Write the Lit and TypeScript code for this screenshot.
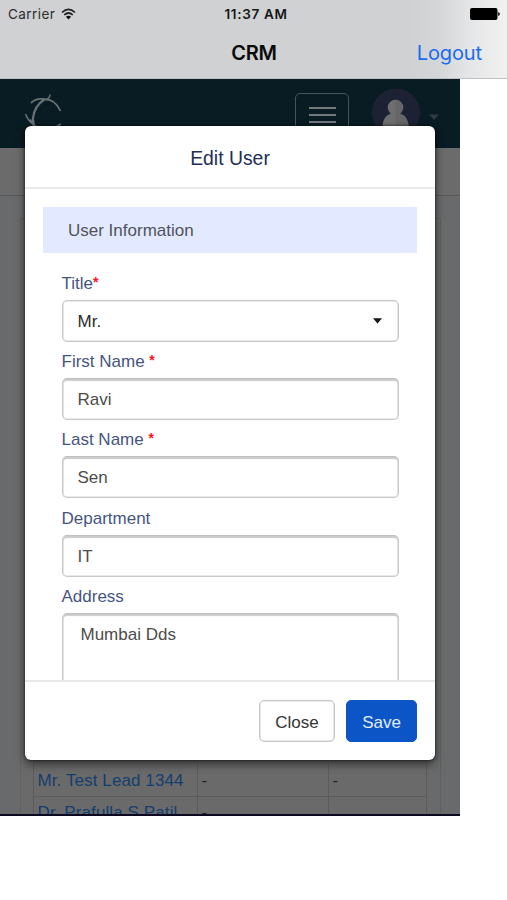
import { LitElement, html, css, svg } from "lit";
import { customElement, property } from "lit/decorators.js";

@customElement("form-field")
class FormField extends LitElement {
  @property() label = "";
  @property() value = "";
  @property() kind = "text";
  @property() mark = "";

  static styles = css`
    :host { display: block; height: 78.2px; }
    .label { box-sizing: border-box; height: 28px; padding-top: 1px; line-height: 22px; color: #46557f; font-size: 17px; white-space: pre; }
    .mark { color: #ff1018; font-weight: bold; font-size: 14px; line-height: 1; vertical-align: 2px; }
    .control {
      box-sizing: border-box; height: 42px; border: 1px solid #c9c9c9; border-radius: 5px;
      background: #fff; padding: 1px 16px 0 15px; display: flex; align-items: center;
      justify-content: space-between; color: #4c4c4c; font-size: 17px; line-height: 23px;
      box-shadow: inset 0 0 0 .6px #d5d5d5;
    }
    .control svg { margin-bottom: 1px; }
    .text, .area { border-top-color: #c0c0c0; box-shadow: inset 0 2px 1px #cbcbcb, inset 0 0 0 .6px #d5d5d5; }
    .select { color: #2b2b2b; }
    .area { height: 100px; align-items: flex-start; padding: 9px 18px; }
  `;

  render() {
    return html`
      <div class="label">${this.label}<span class="mark">${this.mark}</span></div>
      <div class="control ${this.kind}">
        <span>${this.value}</span>
        ${this.kind === "select"
          ? html`<svg width="9" height="6" viewBox="0 0 9 6"><path d="M0 .3H9L4.5 5.5Z" fill="#151515" /></svg>`
          : null}
      </div>
    `;
  }
}

const wifi = svg`
  <path d="M1 4.5Q7.5-1.7 14 4.5M3.2 7Q7.5 3 11.8 7" fill="none" stroke="#222" stroke-width="1.7"/>
  <path d="M4.9 8.7Q7.5 6.6 10.1 8.7L7.5 11.4Z" fill="#111"/>`;

@customElement("app-root")
class AppRoot extends LitElement {
  static styles = css`
    :host {
      display: block; position: relative; width: 507px; height: 900px; overflow: hidden;
      background: #fff; font-family: "Liberation Sans", Arial, sans-serif;
    }
    .native {
      box-sizing: border-box; height: 79px; border-bottom: 1px solid #bfc1c2;
      background: linear-gradient(90deg, #cfd1d2 0, #cfd1d2 410px, #d4d6d7 440px, #e5e6e7 470px, #f1f1f2 507px);
      font-family: Inter, sans-serif;
    }
    .status { height: 28px; display: grid; grid-template-columns: 1fr auto 1fr; align-items: center; padding: 0 7px 0 8px; }
    .carrier { display: flex; align-items: center; gap: 6px; font-size: 13.5px; color: #2c2d2e; letter-spacing: .45px; }
    .time { font-size: 13.5px; font-weight: 600; color: #161616; letter-spacing: .65px; padding-left: 4px; }
    .battery { justify-self: end; display: block; }
    .nav { height: 50px; display: grid; grid-template-columns: 1fr auto 1fr; align-items: center; padding: 0 25px 0 26px; }
    .title { font-size: 20px; font-weight: 600; color: #0a0a0a; grid-column: 2; letter-spacing: -.2px; }
    .logout { font-size: 20px; color: #1a6cf0; justify-self: end; letter-spacing: -.1px; }
    .page {
      box-sizing: border-box; width: 460px; height: 737px; background: #696a6b; overflow: hidden;
      border-bottom: 2px solid #0b0a20; display: flex; flex-direction: column;
    }
    .topbar { flex: none; height: 69px; background: #0a1c23; display: flex; padding: 14px 20px 0 24px; box-sizing: border-box; }
    .logo { flex: none; margin-right: 232px; }
    .burger {
      box-sizing: border-box; width: 54px; height: 50px; flex: none; border: 1px solid #4a555a; border-radius: 5px;
      padding: 12.5px 12.5px; display: flex; flex-direction: column; gap: 5px; margin-right: 23px;
    }
    .bar { height: 2.2px; flex: none; background: #73787c; }
    .avatar { flex: none; margin-top: -5px; }
    .caret { flex: none; margin: 21px 0 0 9px; }
    .subbar { flex: none; box-sizing: border-box; height: 48px; background: #6b6b6b; border-bottom: 1px solid #575757; }
    .well { flex: 1; margin: 22px 19px 0 20px; border: 1px solid #606162; border-bottom: 0; background: #6a6a6a; padding: 0 12px; display: flex; flex-direction: column; justify-content: flex-end; }
    .table { display: grid; grid-template-columns: 164px 131px 98px; border-left: 1px solid #5b5b5b; height: 51px; grid-template-rows: 34px 17px; overflow: hidden; }
    .cell { box-sizing: border-box; border-right: 1px solid #5b5b5b; border-bottom: 1px solid #5b5b5b; padding: 7px 0 0 3.5px; font-size: 17px; line-height: 21px; color: #252525; white-space: nowrap; overflow: hidden; letter-spacing: .1px; }
    .cell.last { border-bottom: 0; padding-top: 5px; }
    .link { color: #143e6e; }
    .modal {
      position: absolute; left: 25px; top: 126px; width: 410px; height: 634px; border-radius: 6px;
      background: #fff; box-shadow: 0 4px 10px rgba(0, 0, 0, .55), 0 0 3px rgba(0, 0, 0, .7); display: flex; flex-direction: column; overflow: hidden;
    }
    .head { flex: none; box-sizing: border-box; height: 63px; border-bottom: 2px solid #ebebeb; display: flex; align-items: center; justify-content: center; color: #242e58; font-size: 19.4px; padding-top: 3px; }
    .body { flex: 1; min-height: 0; overflow: hidden; padding: 18px 18px 0; }
    .section { box-sizing: border-box; height: 46px; display: flex; align-items: center; padding: 2px 0 0 25px; background: #e3eaff; color: #50525c; font-size: 17px; }
    .fields { padding: 19px 18.5px 0; }
    .foot { flex: none; box-sizing: border-box; height: 80px; border-top: 2px solid #e8e8e8; display: flex; justify-content: flex-end; gap: 11px; padding: 18px 18px 0; }
    .btn { box-sizing: border-box; height: 42px; font: 17px "Liberation Sans", Arial, sans-serif; border-radius: 5px; border: 1px solid #c9c9c9; box-shadow: inset 0 0 0 .6px #d5d5d5; background: #fff; color: #343434; width: 76px; padding: 3px 0 0; }
    .primary { width: 71px; background: #0b55c6; border-color: #0b55c6; box-shadow: none; color: #e2edff; }
  `;

  render() {
    return html`
      <div class="native">
        <div class="status">
          <span class="carrier">Carrier <svg width="15" height="12" viewBox="0 0 15 12">${wifi}</svg></span>
          <span class="time">11:37 AM</span>
          <svg class="battery" width="30" height="12" viewBox="0 0 30 12">
            <rect width="27.5" height="12" rx="2" fill="#000" />
            <path d="M28.2 4Q29.8 4.5 29.8 6T28.2 8Z" fill="#000" />
          </svg>
        </div>
        <div class="nav">
          <span class="title">CRM</span>
          <span class="logout">Logout</span>
        </div>
      </div>
      <div class="page">
        <div class="topbar">
          <svg class="logo" width="39" height="50" viewBox="24 93 39 50" fill="none" stroke="#697276">
            <path d="M31 103Q36 98 44 99.2Q55 99 60.5 111" stroke-width="1.8" />
            <path d="M45 99Q34 106 32.8 119L34 126" stroke-width="2.2" />
            <path d="M50 94.5Q50 98 46 100M25.5 114Q29 123 37 127M30 119.5L33 123.5M57 126L61 124" stroke-width="1.5" />
          </svg>
          <div class="burger"><div class="bar"></div><div class="bar"></div><div class="bar"></div></div>
          <svg class="avatar" width="48" height="48" viewBox="0 0 48 48">
            <circle cx="24" cy="24.5" r="24" fill="#1c2233" />
            <circle cx="23.5" cy="19.5" r="7.8" fill="#6e6e6e" />
            <path d="M10.3 41Q10.3 25 23.5 25T36.8 41Z" fill="#6e6e6e" />
            <path d="M23.5 11.7A7.8 7.8 0 0 1 27 26Q36.8 29 36.8 41H23.5Z" fill="#666" />
          </svg>
          <svg class="caret" width="10" height="7" viewBox="0 0 10 7"><path d="M0 .5H10L5 6Z" fill="#2d3a40" /></svg>
        </div>
        <div class="subbar"></div>
        <div class="well">
          <div class="table">
            <div class="cell link">Mr. Test Lead 1344</div><div class="cell">-</div><div class="cell">-</div>
            <div class="cell last link">Dr. Prafulla S Patil</div><div class="cell last">-</div><div class="cell last"></div>
          </div>
        </div>
      </div>
      <div class="modal">
        <div class="head">Edit User</div>
        <div class="body">
          <div class="section">User Information</div>
          <div class="fields">
            <form-field label="Title" mark="*" kind="select" value="Mr."></form-field>
            <form-field label="First Name " mark="*" value="Ravi"></form-field>
            <form-field label="Last Name " mark="*" value="Sen"></form-field>
            <form-field label="Department" value="IT"></form-field>
            <form-field label="Address" kind="area" value="Mumbai Dds"></form-field>
          </div>
        </div>
        <div class="foot">
          <button class="btn">Close</button>
          <button class="btn primary">Save</button>
        </div>
      </div>
    `;
  }
}
